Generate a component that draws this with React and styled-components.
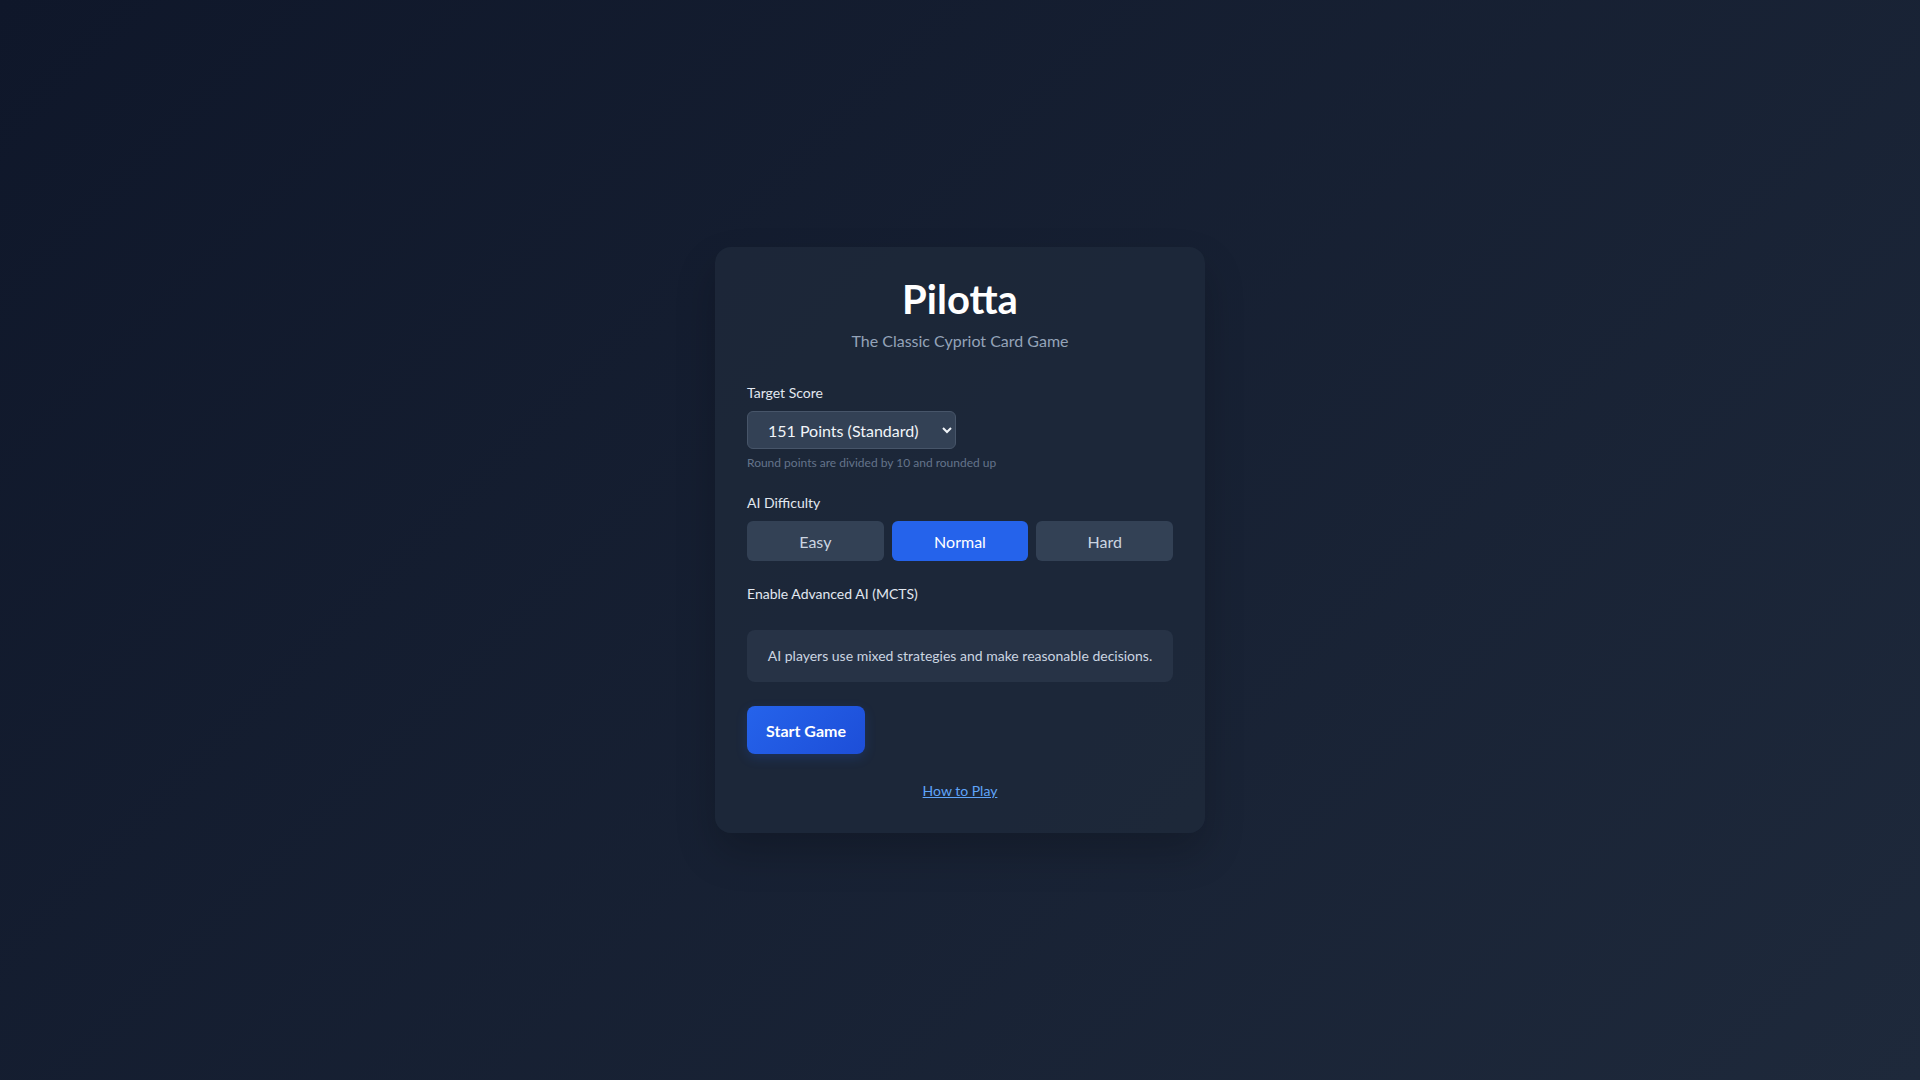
import React, { useState } from "react";
import styled, { createGlobalStyle } from "styled-components";

const Global = createGlobalStyle`
  html, body { margin: 0; padding: 0; }
  body {
    font-family: "Lato", "Noto Sans", "Liberation Sans", sans-serif;
    background: linear-gradient(135deg, #0f172a 0%, #1e293b 100%);
    min-height: 100vh;
    color: #f1f5f9;
  }
  * { box-sizing: border-box; }
`;

const Page = styled.div`
  min-height: 100vh;
  display: flex;
  align-items: center;
  justify-content: center;
`;

const Card = styled.div`
  width: 490px;
  background: rgba(30, 41, 59, 0.8);
  border-radius: 16px;
  padding: 32px 32px 34px;
  box-shadow: 0 20px 40px rgba(0, 0, 0, 0.2);
  display: flex;
  flex-direction: column;
`;

const Title = styled.h1`
  margin: 0;
  font-size: 40px;
  line-height: 40px;
  font-weight: 700;
  text-align: center;
  color: #ffffff;
`;

const Subtitle = styled.p`
  margin: 12px 0 34px;
  font-size: 16px;
  text-align: center;
  color: #94a3b8;
`;

const Section = styled.div`
  display: flex;
  flex-direction: column;
  align-items: flex-start;
  margin-bottom: ${(p) => p.$mb ?? 24}px;
`;

const Label = styled.label`
  font-size: 14px;
  color: #e2e8f0;
  margin-bottom: ${(p) => p.$mb ?? 10}px;
`;

const Select = styled.select`
  font-family: inherit;
  font-size: 16px;
  color: #f1f5f9;
  background: #334155;
  border: 1px solid #475569;
  border-radius: 6px;
  padding: 8px 20px 8px 16px;
  height: 38px;
  color-scheme: dark;
`;

const Hint = styled.p`
  margin: 6px 0 0;
  font-size: 12px;
  color: #64748b;
`;

const ButtonRow = styled.div`
  display: grid;
  grid-template-columns: repeat(3, 1fr);
  gap: 8px;
  width: 100%;
`;

const DiffButton = styled.button`
  font-family: inherit;
  font-size: 16px;
  height: 40px;
  border: none;
  border-radius: 6px;
  cursor: pointer;
  background: ${(p) => (p.$active ? "#2563eb" : "#334155")};
  color: ${(p) => (p.$active ? "#ffffff" : "#cbd5e1")};
`;

const InfoBox = styled.div`
  width: 100%;
  background: #273346;
  border-radius: 8px;
  padding: 16px;
  font-size: 14px;
  line-height: 20px;
  color: #cbd5e1;
  text-align: center;
`;

const StartButton = styled.button`
  align-self: flex-start;
  font-family: inherit;
  font-size: 16px;
  font-weight: 700;
  color: #ffffff;
  height: 48px;
  padding: 0 19px;
  border: none;
  border-radius: 8px;
  background: linear-gradient(135deg, #2563eb 0%, #1d4ed8 100%);
  box-shadow: 0 4px 12px rgba(37, 99, 235, 0.2);
  cursor: pointer;
  margin-top: 24px;
`;

const HelpLink = styled.a`
  align-self: center;
  margin-top: 28px;
  font-size: 14px;
  color: #60a5fa;
  text-decoration: underline;
  cursor: pointer;
`;

export default function App() {
  const [difficulty, setDifficulty] = useState("Normal");
  return (
    <>
      <Global />
      <Page>
        <Card>
          <Title>Pilotta</Title>
          <Subtitle>The Classic Cypriot Card Game</Subtitle>

          <Section>
            <Label>Target Score</Label>
            <Select defaultValue="151">
              <option value="101">101 Points (Short)</option>
              <option value="151">151 Points (Standard)</option>
              <option value="201">201 Points (Long)</option>
            </Select>
            <Hint>Round points are divided by 10 and rounded up</Hint>
          </Section>

          <Section>
            <Label>AI Difficulty</Label>
            <ButtonRow>
              {["Easy", "Normal", "Hard"].map((d) => (
                <DiffButton
                  key={d}
                  $active={difficulty === d}
                  onClick={() => setDifficulty(d)}
                >
                  {d}
                </DiffButton>
              ))}
            </ButtonRow>
          </Section>

          <Section $mb={0}>
            <Label $mb={28}>Enable Advanced AI (MCTS)</Label>
            <InfoBox>
              AI players use mixed strategies and make reasonable decisions.
            </InfoBox>
          </Section>

          <StartButton>Start Game</StartButton>
          <HelpLink>How to Play</HelpLink>
        </Card>
      </Page>
    </>
  );
}
